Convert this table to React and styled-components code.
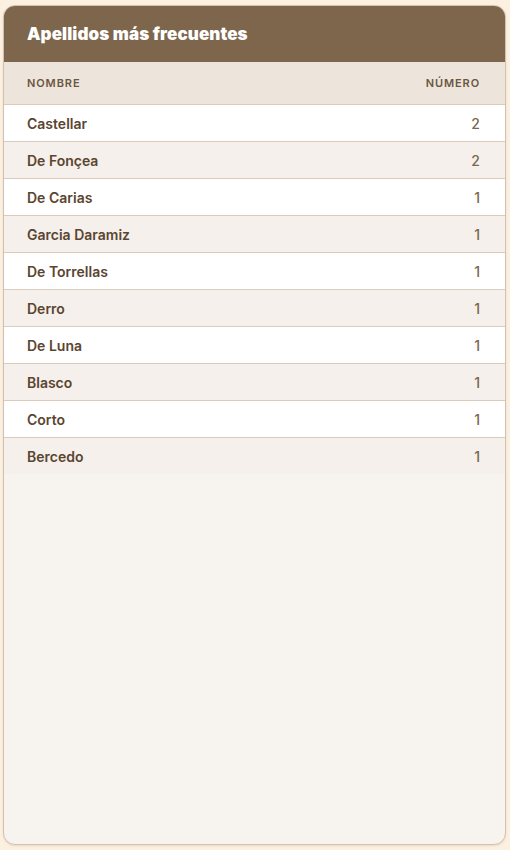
import styled, { createGlobalStyle } from "styled-components";

const GlobalStyle = createGlobalStyle`
  html, body {
    margin: 0;
    padding: 0;
    background: #fcf0e1;
    font-family: Inter, "Noto Sans", sans-serif;
  }
`;

const Page = styled.div`
  box-sizing: border-box;
  height: 850px;
  padding: 5px 4px 5px 3px;
  display: flex;
`;

const Card = styled.div`
  flex: 1;
  display: flex;
  flex-direction: column;
  background: #f7f3ee;
  border: 1px solid #d3c2b0;
  border-radius: 12px;
  overflow: hidden;
  box-shadow: 0 1px 2px rgba(120, 90, 60, 0.15);
`;

const Header = styled.div`
  background: #7d664c;
  color: #fff;
  height: 56px;
  padding: 0 23px;
  display: flex;
  align-items: center;
  font-size: 17px;
  font-weight: 900;
  letter-spacing: 0.1px;
`;

const Table = styled.div`
  display: flex;
  flex-direction: column;
`;

const Row = styled.div`
  display: flex;
  justify-content: space-between;
  align-items: center;
  height: ${(p) => (p.$head ? "42px" : "36px")};
  padding: 0 25px 0 23px;
  background: ${(p) => (p.$head ? "#ede5dc" : p.$alt ? "#f5f0eb" : "#ffffff")};
  border-bottom: 1px solid #dccbbb;
  &:last-child {
    border-bottom: none;
  }
`;

const HeadCell = styled.span`
  font-size: 11px;
  font-weight: 600;
  letter-spacing: 0.9px;
  color: #6b5640;
  text-transform: uppercase;
`;

const Name = styled.span`
  font-size: 14px;
  font-weight: 600;
  color: #5a4530;
`;

const Count = styled.span`
  font-size: 14px;
  font-weight: 500;
  color: #7d664c;
`;

const apellidos = [
  ["Castellar", 2],
  ["De Fonçea", 2],
  ["De Carias", 1],
  ["Garcia Daramiz", 1],
  ["De Torrellas", 1],
  ["Derro", 1],
  ["De Luna", 1],
  ["Blasco", 1],
  ["Corto", 1],
  ["Bercedo", 1],
];

export default function App() {
  return (
    <>
      <GlobalStyle />
      <Page>
        <Card>
          <Header>Apellidos más frecuentes</Header>
          <Table>
            <Row $head>
              <HeadCell>Nombre</HeadCell>
              <HeadCell>Número</HeadCell>
            </Row>
            {apellidos.map(([name, n], i) => (
              <Row key={name} $alt={i % 2 === 1}>
                <Name>{name}</Name>
                <Count>{n}</Count>
              </Row>
            ))}
          </Table>
        </Card>
      </Page>
    </>
  );
}
